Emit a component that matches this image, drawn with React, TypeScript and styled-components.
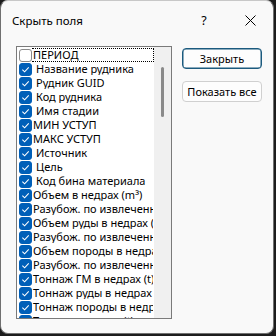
import styled, { createGlobalStyle } from "styled-components";

const GlobalStyle = createGlobalStyle`
  html, body {
    margin: 0;
    padding: 0;
    background: #1c1c1c;
  }
  body {
    font-family: "Noto Sans", "Open Sans", sans-serif;
    font-size: 11px;
    color: #000;
  }
`;

const FIELDS: { label: string; checked: boolean; pad?: boolean }[] = [
  { label: "ПЕРИОД", checked: false },
  { label: "Название рудника", checked: true, pad: true },
  { label: "Рудник GUID", checked: true, pad: true },
  { label: "Код рудника", checked: true, pad: true },
  { label: "Имя стадии", checked: true, pad: true },
  { label: "МИН УСТУП", checked: true },
  { label: "МАКС УСТУП", checked: true },
  { label: "Источник", checked: true, pad: true },
  { label: "Цель", checked: true, pad: true },
  { label: "Код бина материала", checked: true, pad: true },
  { label: "Объем в недрах (m³)", checked: true },
  { label: "Разубож. по извлеченной руде", checked: true },
  { label: "Объем руды в недрах (m³)", checked: true },
  { label: "Разубож. по извлеченной породе", checked: true },
  { label: "Объем породы в недрах (m³)", checked: true },
  { label: "Разубож. по извлеченному ГМ", checked: true },
  { label: "Тоннаж ГМ в недрах (t)", checked: true },
  { label: "Тоннаж руды в недрах (t)", checked: true },
  { label: "Тоннаж породы в недрах (t)", checked: true },
  { label: "Тоннаж металла (t)", checked: true },
];

const Window = styled.div`
  width: 272px;
  height: 332px;
  border: 1px solid #707070;
  border-top-color: #c8c8c8;
  border-radius: 8px;
  background: #f9f9f9;
  display: flex;
  flex-direction: column;
  overflow: hidden;
`;

const TitleBar = styled.div`
  height: 40px;
  display: flex;
  align-items: center;
  padding-left: 11px;
  flex-shrink: 0;
`;

const Title = styled.div`
  flex-grow: 1;
  font-size: 11.5px;
  margin-top: -1px;
`;

const TitleButton = styled.div`
  width: 46px;
  height: 30px;
  display: flex;
  align-items: center;
  justify-content: center;
  font-size: 12.5px;
  margin-top: -2px;
  svg {
    width: 11px;
    height: 11px;
  }
`;

const Body = styled.div`
  display: flex;
  gap: 10px;
  padding: 5px 0 0 15px;
`;

const ListBox = styled.div`
  width: 154px;
  height: 271px;
  border: 1px solid #7a7a7a;
  background: #fff;
  display: flex;
  overflow: hidden;
`;

const Items = styled.div`
  flex-grow: 1;
  min-width: 0;
  padding: 1px 0 0 2px;
  overflow: hidden;
`;

const Row = styled.div`
  height: 14px;
  display: flex;
  align-items: center;
  white-space: nowrap;
  overflow: hidden;
`;

const Check = styled.span<{ $checked: boolean }>`
  width: 13px;
  height: 13px;
  box-sizing: border-box;
  border-radius: 3px;
  flex-shrink: 0;
  display: flex;
  align-items: center;
  justify-content: center;
  background: ${({ $checked }) => ($checked ? "#005fb8" : "#fff")};
  border: 1px solid ${({ $checked }) => ($checked ? "#005fb8" : "#8a8a8a")};
  svg {
    width: 9px;
    height: 9px;
  }
`;

const Label = styled.span<{ $focused?: boolean; $pad?: boolean }>`
  flex-grow: 1;
  height: 14px;
  box-sizing: border-box;
  padding-left: ${({ $pad }) => ($pad ? "4px" : "1px")};
  overflow: hidden;
  border: 1px dotted ${({ $focused }) => ($focused ? "#000" : "transparent")};
  border-left: none;
  line-height: 12px;
`;

const ScrollTrack = styled.div`
  width: 17px;
  flex-shrink: 0;
  background: #f0f0f0;
  display: flex;
  justify-content: center;
  padding-top: 20px;
`;

const Thumb = styled.div`
  width: 3px;
  height: 50px;
  border-radius: 2px;
  background: #8a8a8a;
`;

const Buttons = styled.div`
  display: flex;
  flex-direction: column;
  gap: 12px;
  padding-top: 2px;
`;

const Button = styled.div<{ $primary?: boolean }>`
  width: 80px;
  height: 21px;
  box-sizing: border-box;
  border-radius: 4px;
  display: flex;
  align-items: center;
  justify-content: center;
  font-size: 11px;
  white-space: nowrap;
  background: #fdfdfd;
  border: 1px solid ${({ $primary }) => ($primary ? "#1b5a7e" : "#d0d0d0")};
  ${({ $primary }) => ($primary ? "box-shadow: inset 0 0 0 0.5px #1b5a7e;" : "")}
`;

const CheckMark = () => (
  <svg viewBox="0 0 10 10">
    <path d="M1.5 5.2 L4 7.6 L8.6 2.6" fill="none" stroke="#fff" strokeWidth="1.2" />
  </svg>
);

const CloseIcon = () => (
  <svg viewBox="0 0 11 11">
    <path d="M0.5 0.5 L10.5 10.5 M10.5 0.5 L0.5 10.5" stroke="#000" strokeWidth="1" />
  </svg>
);

export default function App() {
  return (
    <>
      <GlobalStyle />
      <Window>
        <TitleBar>
          <Title>Скрыть поля</Title>
          <TitleButton>?</TitleButton>
          <TitleButton>
            <CloseIcon />
          </TitleButton>
        </TitleBar>
        <Body>
          <ListBox>
            <Items>
              {FIELDS.map((f, i) => (
                <Row key={f.label}>
                  <Check $checked={f.checked}>{f.checked && <CheckMark />}</Check>
                  <Label $focused={i === 0} $pad={f.pad}>
                    {f.label}
                  </Label>
                </Row>
              ))}
            </Items>
            <ScrollTrack>
              <Thumb />
            </ScrollTrack>
          </ListBox>
          <Buttons>
            <Button $primary>Закрыть</Button>
            <Button>Показать все</Button>
          </Buttons>
        </Body>
      </Window>
    </>
  );
}
